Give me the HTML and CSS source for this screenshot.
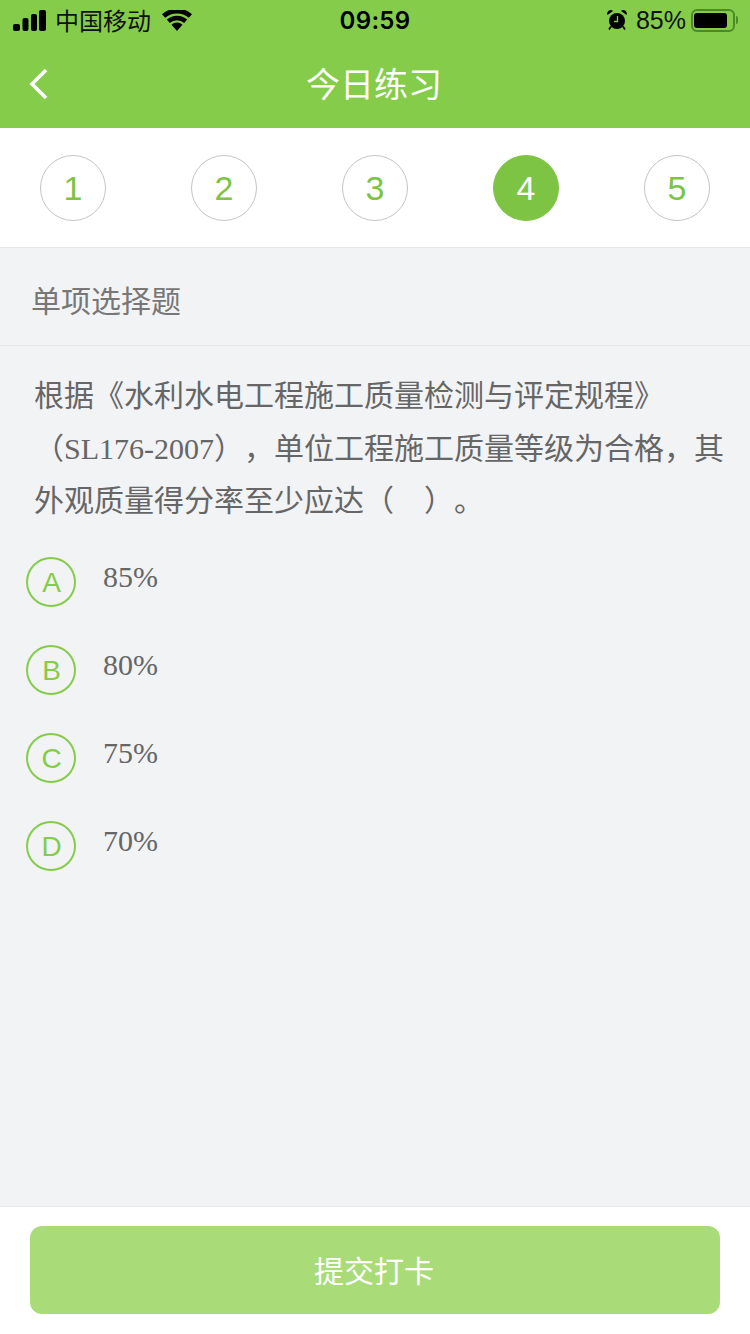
FILE: index.html
```html
<!DOCTYPE html>
<html lang="zh-CN">
<head>
    <meta charset="UTF-8">
    <meta name="viewport" content="width=device-width, initial-scale=1.0">
    <title>今日练习</title>
    <link rel="stylesheet" href="styles.css">
</head>
<body>

    <!-- Status bar + nav -->
    <header class="top">
        <div class="status">
            <div class="status-side">
                <svg class="signal" width="33" height="21" viewBox="0 0 33 21"><rect x="0" y="14" width="7" height="7" rx="2"/><rect x="9.500" y="8" width="6" height="13" rx="2"/><rect x="18" y="4" width="6" height="17" rx="2"/><rect x="26" y="0" width="7" height="21" rx="2"/></svg>
                <span class="carrier">中国移动</span>
                <svg class="wifi" width="30" height="21" viewBox="0 0 30 21"><path d="M15 21l-5.500-6.200a8 8 0 0 1 11 0z"/><path d="M7.800 12.900l-3-3.400a15.500 15.500 0 0 1 20.400 0l-3 3.400a11 11 0 0 0-14.400 0z"/><path d="M3.200 7.800L0 4.200a22.800 22.800 0 0 1 30 0l-3.200 3.600a18 18 0 0 0-23.600 0z"/></svg>
            </div>
            <div class="status-time">09:59</div>
            <div class="status-side status-right">
                <svg class="alarm" width="20" height="20" viewBox="0 0 20 20"><circle cx="10" cy="11" r="8"/><path d="M.5 5a3.500 3.500 0 0 1 5.500-4zM19.500 5a3.500 3.500 0 0 0-5.500-4z"/><path d="M4 16.500l-2 3M16 16.500l2 3" stroke="#000" stroke-width="1.800"/><path d="M10.500 6v5.500H7" fill="none" stroke="#85cc4b" stroke-width="1.300"/></svg>
                <span class="percent">85%</span>
                <div class="battery"><div class="battery-fill"></div></div>
                <div class="battery-cap"></div>
            </div>
        </div>
        <nav class="nav">
            <svg class="back" width="20" height="32" viewBox="0 0 20 32"><path d="M17 2L3 16l14 14" fill="none" stroke="#fff" stroke-width="3.600"/></svg>
            <h1 class="nav-title">今日练习</h1>
        </nav>
    </header>

    <!-- Question numbers -->
    <div class="steps">
        <div class="step">1</div>
        <div class="step">2</div>
        <div class="step">3</div>
        <div class="step step-active">4</div>
        <div class="step">5</div>
    </div>

    <main class="content">
        <div class="qtype">单项选择题</div>
        <p class="question">根据《水利水电工程施工质量检测与评定规程》<br>（SL176-2007），单位工程施工质量等级为合格，其<br>外观质量得分率至少应达（&nbsp;&nbsp;&nbsp;&nbsp;）。</p>

        <ul class="options">
            <li class="option"><span class="option-mark">A</span><span class="option-text">85%</span></li>
            <li class="option"><span class="option-mark">B</span><span class="option-text">80%</span></li>
            <li class="option"><span class="option-mark">C</span><span class="option-text">75%</span></li>
            <li class="option"><span class="option-mark">D</span><span class="option-text">70%</span></li>
        </ul>
    </main>

    <footer class="footer">
        <button class="submit" type="button">提交打卡</button>
    </footer>

</body>
</html>
```

FILE: styles.css
```css
* {
    box-sizing: border-box;
}

body {
    margin: 0;
    height: 1334px;
    display: flex;
    flex-direction: column;
    overflow: hidden;
    background: #f2f3f5;
    font-family: "Liberation Sans", "Noto Sans CJK SC", sans-serif;
}

.top {
    height: 128px;
    background: #85cc4b;
}

.status {
    height: 40px;
    padding: 0 12px 0 13px;
    display: flex;
    align-items: center;
    justify-content: space-between;
    color: #000;
    position: relative;
}

.status-side {
    display: flex;
    align-items: center;
}

.status svg {
    display: block;
}

.carrier {
    margin-left: 9px;
    padding-top: 3px;
    font-size: 24px;
    line-height: 40px;
    color: #111;
}

.wifi {
    margin-left: 11px;
    margin-top: 1px;
}

.status-time {
    position: absolute;
    left: 0;
    right: 0;
    text-align: center;
    font-family: Inter, "Liberation Sans", sans-serif;
    font-size: 24px;
    font-weight: 600;
    letter-spacing: 0.3px;
    padding-top: 1px;
}

.percent {
    margin-left: 9px;
    font-size: 25px;
    color: #111;
}

.battery {
    margin-left: 5px;
    width: 44px;
    height: 23px;
    padding: 2px 2px 2px 1px;
    border: 2px solid #4b8a25;
    border-radius: 6px;
}

.battery-fill {
    width: 33px;
    height: 100%;
    background: #000;
    border-radius: 3px;
}

.battery-cap {
    margin-left: 1px;
    width: 2px;
    height: 8px;
    background: #4b8a25;
    border-radius: 0 2px 2px 0;
}

.nav {
    height: 88px;
    position: relative;
    display: flex;
    align-items: center;
    justify-content: center;
}

.back {
    position: absolute;
    left: 29px;
    top: 28px;
}

.nav-title {
    margin: 0 2px 3px 0;
    font-size: 34px;
    font-weight: normal;
    color: #fff;
}

.steps {
    height: 120px;
    padding: 27px 40px 0;
    display: flex;
    justify-content: space-between;
    background: #fff;
    border-bottom: 1px solid #e6e6e6;
}

.step {
    width: 66px;
    height: 66px;
    border: 1px solid #c4c4c4;
    border-radius: 50%;
    display: flex;
    align-items: center;
    justify-content: center;
    font-size: 34px;
    color: #7dc445;
}

.step-active {
    background: #7dc445;
    border-color: #7dc445;
    color: #fff;
}

.content {
    flex: 1;
}

.qtype {
    height: 98px;
    padding: 36px 0 0 31px;
    border-bottom: 1px solid #e6e7e9;
    font-size: 30px;
    line-height: 36px;
    color: #777;
}

.question {
    margin: 0;
    padding: 24px 20px 0 34px;
    font-family: "Liberation Serif", "Noto Sans CJK SC", serif;
    font-size: 30px;
    line-height: 52.500px;
    color: #666;
    white-space: nowrap;
    text-spacing-trim: space-all;
    font-kerning: none;
}

.options {
    list-style: none;
    margin: 0;
    padding: 29px 0 0 26px;
}

.option {
    height: 88px;
    display: flex;
    align-items: flex-start;
}

.option-mark {
    width: 50px;
    height: 50px;
    padding: 2px 0 0 1px;
    border: 2px solid #85cc4b;
    border-radius: 50%;
    display: flex;
    align-items: center;
    justify-content: center;
    font-size: 28px;
    color: #85cc4b;
}

.option-text {
    margin-left: 27px;
    font-family: "Liberation Serif", serif;
    font-size: 30px;
    line-height: 40px;
    color: #666;
}

.footer {
    height: 128px;
    padding: 19px 30px 0;
    background: #fff;
    border-top: 1px solid #e8e9eb;
}

.submit {
    display: block;
    width: 100%;
    height: 88px;
    padding: 0 2px 3px 0;
    border: 0;
    border-radius: 12px;
    background: #a9dc78;
    font-family: "Liberation Sans", "Noto Sans CJK SC", sans-serif;
    font-size: 30px;
    color: #fff;
}
```
